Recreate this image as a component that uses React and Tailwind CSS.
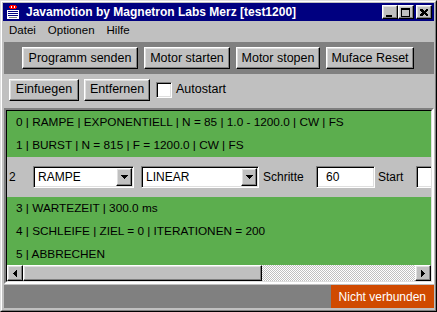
const RAISED =
  'border border-t-white border-l-white border-r-black border-b-black shadow-[inset_-1px_-1px_0_#808080,inset_1px_1px_0_#dfdfdf] bg-[#c0c0c0]';
const SUNKEN =
  'border border-t-[#808080] border-l-[#808080] border-r-white border-b-white shadow-[inset_1px_1px_0_#000,inset_-1px_-1px_0_#dfdfdf]';
const FONT = "font-['Liberation_Sans',Arial,sans-serif]";

const rows = [
  '0 | RAMPE | EXPONENTIELL | N = 85 | 1.0 - 1200.0 | CW | FS',
  '1 | BURST | N = 815 | F = 1200.0 | CW | FS',
];
const rowsAfter = [
  '3 | WARTEZEIT | 300.0 ms',
  '4 | SCHLEIFE | ZIEL = 0 | ITERATIONEN = 200',
  '5 | ABBRECHEN',
];

function Btn({ w, children }) {
  return (
    <div className={`${RAISED} ${w} h-[22px] flex items-center justify-center text-[12.5px] text-black`}>
      {children}
    </div>
  );
}

function TitleIcon() {
  return (
    <svg width="16" height="16" viewBox="0 0 16 16" shapeRendering="crispEdges">
      <rect x="0" y="0" width="16" height="16" fill="#000080" />
      <path d="M5 1h6v1h1v2h-1v1h-6v-1h-1v-2h1z" fill="#ff0000" />
      <rect x="6" y="2" width="1" height="2" fill="#fff" />
      <rect x="9" y="2" width="1" height="2" fill="#fff" />
      <rect x="2" y="6" width="12" height="9" fill="#ffffff" />
      <rect x="3" y="7" width="10" height="1" fill="#000080" />
      <rect x="3" y="9" width="10" height="1" fill="#000080" />
      <rect x="3" y="11" width="10" height="1" fill="#000080" />
      <rect x="4" y="13" width="8" height="1" fill="#808080" />
    </svg>
  );
}

function WinBtn({ kind }) {
  return (
    <div className={`${RAISED} w-[16px] h-[14px] flex items-center justify-center`}>
      <svg width="10" height="9" viewBox="0 0 10 9" shapeRendering="crispEdges">
        {kind === 'min' && <rect x="1" y="7" width="6" height="2" fill="#000" />}
        {kind === 'max' && (
          <path d="M0 0h9v9h-9z M1 2v6h7v-6z" fill="#000" fillRule="evenodd" />
        )}
        {kind === 'close' && (
          <path d="M1 1h2l2 2 2-2h2v1l-2 2.5 2 2.5v1h-2l-2-2-2 2h-2v-1l2-2.5-2-2.5z" fill="#000" />
        )}
      </svg>
    </div>
  );
}

function Combo({ w, value }) {
  return (
    <div className={`${SUNKEN} ${w} h-[22px] bg-white flex items-stretch p-px`}>
      <div className="flex-1 flex items-center pl-[3px] text-[12px] text-black">{value}</div>
      <div className={`${RAISED} w-[16px] flex items-center justify-center`}>
        <svg width="7" height="4" viewBox="0 0 7 4" shapeRendering="crispEdges">
          <path d="M0 0h7l-3.5 4z" fill="#000" />
        </svg>
      </div>
    </div>
  );
}

function Field({ w, value }) {
  return (
    <div className={`${SUNKEN} ${w} h-[22px] bg-white flex items-center pl-[9px] text-[12px] text-black shrink-0`}>
      {value}
    </div>
  );
}

function Arrow({ dir }) {
  return (
    <div className={`${RAISED} w-[16px] h-[16px] flex items-center justify-center shrink-0`}>
      <svg width="4" height="7" viewBox="0 0 4 7" shapeRendering="crispEdges">
        <path d={dir === 'left' ? 'M4 0v7l-4-3.5z' : 'M0 0v7l4-3.5z'} fill="#000" />
      </svg>
    </div>
  );
}

export default function App() {
  return (
    <div className={`${FONT} w-[437px] h-[312px] bg-[#c0c0c0] border border-t-[#dfdfdf] border-l-[#dfdfdf] border-r-black border-b-black overflow-hidden`}>
      <div className="h-full border border-t-white border-l-white border-r-[#808080] border-b-[#808080] p-px flex flex-col">
        {/* title bar */}
        <div className="h-[18px] bg-[#000080] flex items-center pl-[2px] pr-[2px] shrink-0">
          <TitleIcon />
          <span className="ml-[5px] text-white font-bold text-[12px] leading-none flex-1">
            Javamotion by Magnetron Labs Merz [test1200]
          </span>
          <WinBtn kind="min" />
          <WinBtn kind="max" />
          <div className="w-[2px]" />
          <WinBtn kind="close" />
        </div>

        {/* menu */}
        <div className="h-[20px] flex items-center text-[11.5px] text-black shrink-0">
          <span className="ml-[6px]">Datei</span>
          <span className="ml-[12px]">Optionen</span>
          <span className="ml-[12px]">Hilfe</span>
        </div>

        {/* toolbar */}
        <div className="mt-px ml-px h-[32px] bg-[#808080] flex items-center gap-[6px] pl-[18px] shrink-0">
          <Btn w="w-[116px]">Programm senden</Btn>
          <Btn w="w-[86px]">Motor starten</Btn>
          <Btn w="w-[84px]">Motor stopen</Btn>
          <Btn w="w-[88px]">Muface Reset</Btn>
        </div>

        {/* edit row */}
        <div className="h-[31px] flex items-center pl-[6px] shrink-0">
          <Btn w="w-[70px]">Einfuegen</Btn>
          <div className="w-[5px]" />
          <Btn w="w-[66px]">Entfernen</Btn>
          <div className={`${SUNKEN} ml-[6px] w-[16px] h-[16px] bg-white`} />
          <span className="ml-[4px] text-[12.5px] text-black">Autostart</span>
        </div>

        {/* program list */}
        <div className="mt-[3px] ml-px h-[176px] border-2 border-t-[#808080] border-l-[#808080] border-r-white border-b-white shrink-0">
          <div className="h-full border-l border-t border-l-black border-t-black border-r border-b border-r-[#dfdfdf] border-b-[#dfdfdf] flex flex-col">
            <div className="flex-1 overflow-hidden text-[11.8px] text-black">
              {rows.map((r) => (
                <div key={r} className="h-[23px] bg-[#5cae4e] flex items-center pl-[9px] whitespace-nowrap">
                  {r}
                </div>
              ))}
              <div className="h-[40px] flex items-center whitespace-nowrap text-[12px]">
                <span className="w-[26px] pl-[2px] shrink-0">2</span>
                <Combo w="w-[101px] shrink-0" value="RAMPE" />
                <div className="w-[7px] shrink-0" />
                <Combo w="w-[118px] shrink-0" value="LINEAR" />
                <span className="ml-[4px] w-[53px] shrink-0">Schritte</span>
                <Field w="w-[59px]" value="60" />
                <span className="ml-[3px] w-[38px] shrink-0">Start</span>
                <Field w="w-[60px]" value="" />
              </div>
              {rowsAfter.map((r) => (
                <div key={r} className="h-[23px] bg-[#5cae4e] flex items-center pl-[9px] whitespace-nowrap">
                  {r}
                </div>
              ))}
              <div className="h-[10px] bg-[#5cae4e]" />
            </div>

            {/* horizontal scrollbar */}
            <div className="h-[16px] flex shrink-0">
              <Arrow dir="left" />
              <div className={`${RAISED} w-[239px] h-[16px] shrink-0`} />
              <div className="flex-1 bg-[repeating-conic-gradient(#c0c0c0_0_25%,#ffffff_0_50%)] bg-[length:2px_2px]" />
              <Arrow dir="right" />
            </div>
          </div>
        </div>

        {/* status bar */}
        <div className="mt-px ml-px h-[23px] bg-[#808080] flex justify-end shrink-0">
          <div className="bg-[#d04a00] text-white text-[12px] flex items-center px-[8px]">
            Nicht verbunden
          </div>
        </div>
      </div>
    </div>
  );
}
